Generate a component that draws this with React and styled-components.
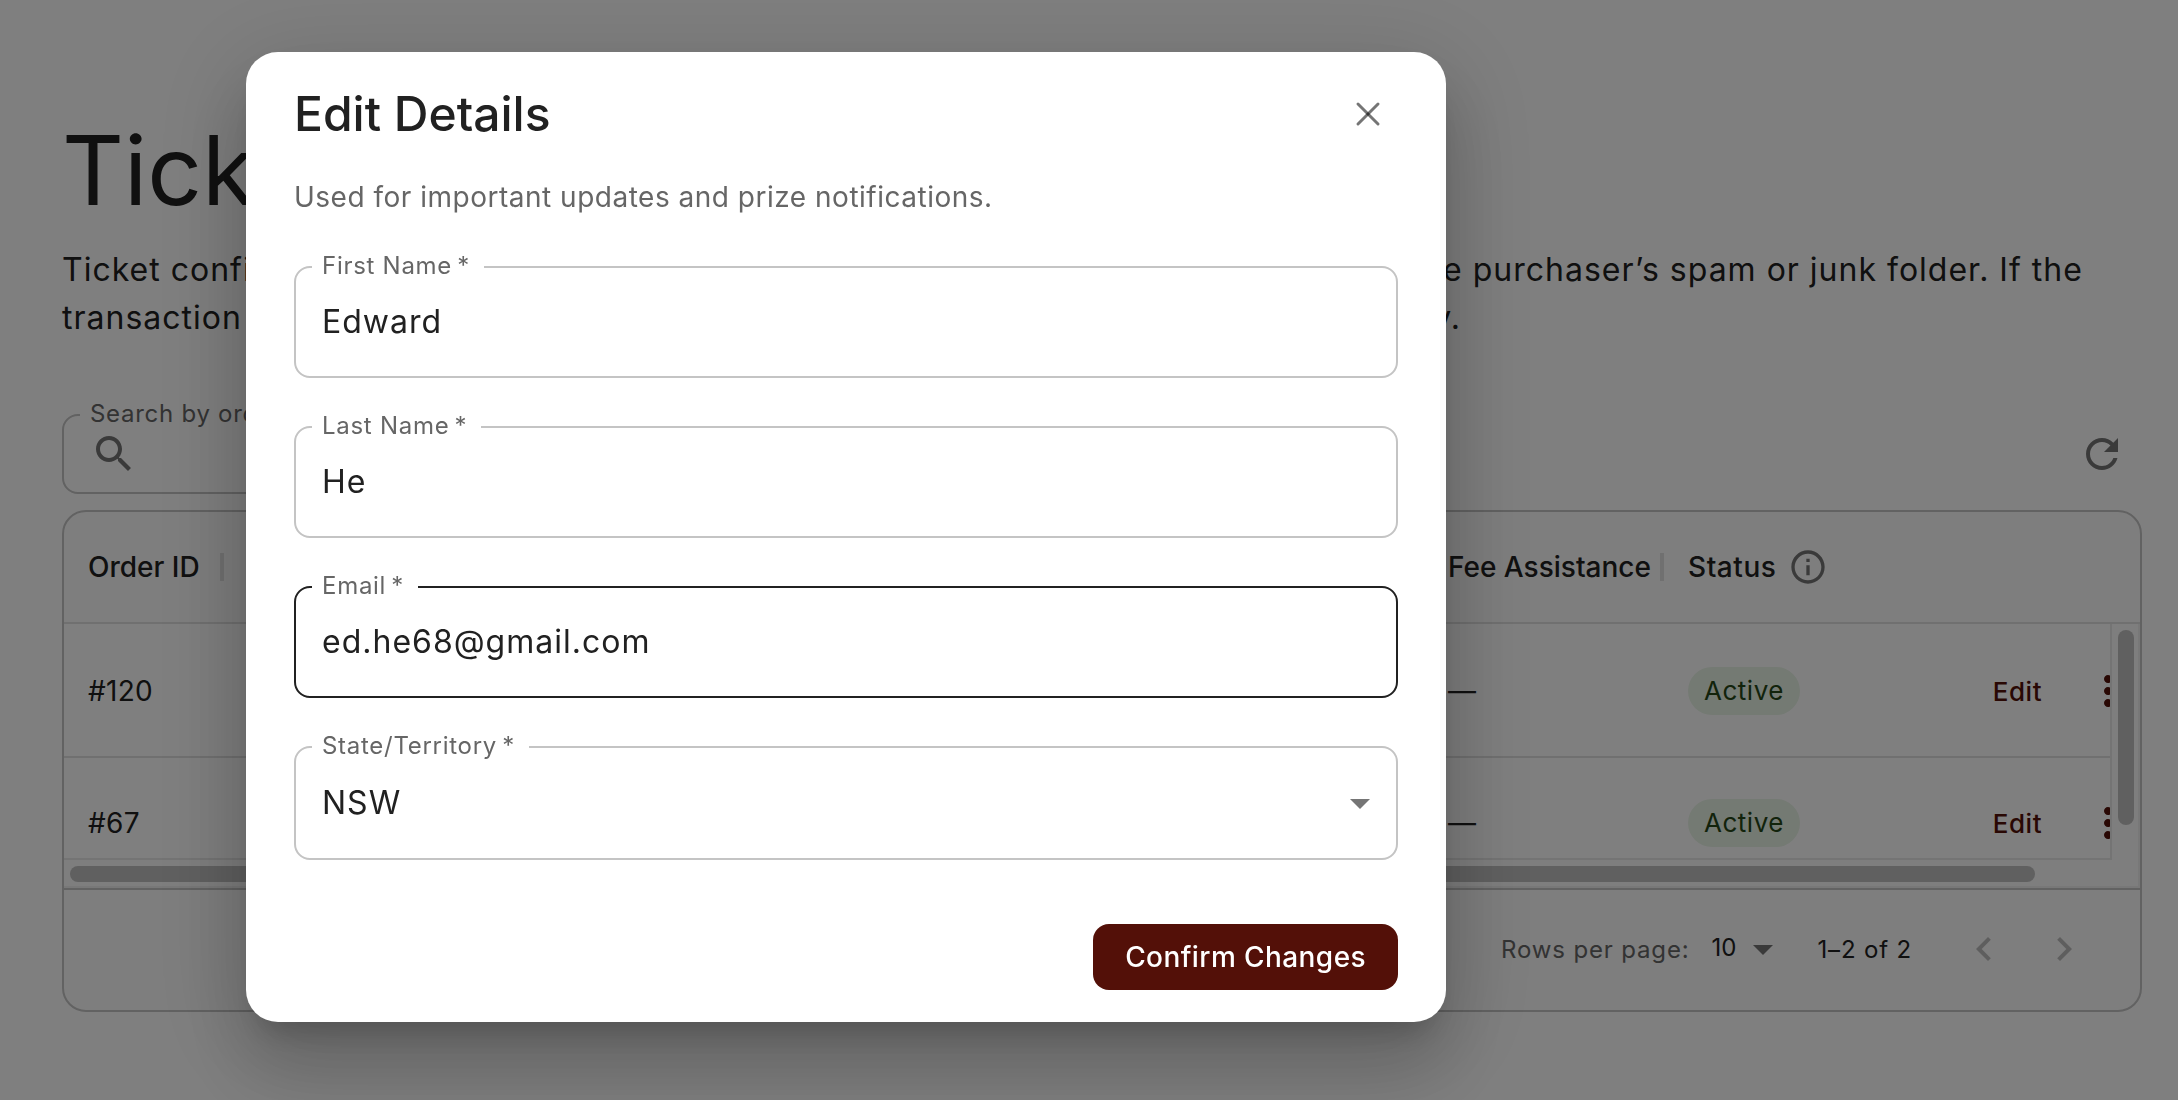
import React from "react";
import styled, { createGlobalStyle } from "styled-components";

const GlobalStyle = createGlobalStyle`
  * { box-sizing: border-box; }
  body {
    margin: 0;
    background: #fff;
    color: #212121;
    font-family: Inter, "Liberation Sans", sans-serif;
    overflow: hidden;
  }
  button, input, select { font: inherit; letter-spacing: inherit; color: inherit; }
`;

const Page = styled.main`
  min-height: 100vh;
  padding: 114px 36px 88px 62px;
`;

const PageTitle = styled.h1`
  margin: 0 0 20px;
  font-size: 96px;
  line-height: 112px;
  font-weight: 400;
`;

const Intro = styled.p`
  margin: 0 0 72px;
  font-size: 32px;
  line-height: 48px;
  letter-spacing: 1px;
`;

const Toolbar = styled.div`
  display: flex;
  align-items: center;
  justify-content: space-between;
  margin-bottom: 16px;
`;

const Outline = styled.div`
  position: relative;
  display: flex;
  align-items: center;
  width: ${(p) => p.$width || "100%"};
  height: ${(p) => p.$height || "112px"};
  padding: 0 ${(p) => p.$endPad || "26px"} 0 26px;
  border: 2px solid ${(p) => (p.$active ? "#212121" : "#c4c4c4")};
  border-radius: 16px;
`;

const FloatingLabel = styled.label`
  position: absolute;
  top: -14px;
  left: 16px;
  padding: 0 14px 0 10px;
  background: #fff;
  color: #666;
  font-size: 24px;
  line-height: 24px;
  letter-spacing: 0.03em;
  white-space: nowrap;
`;

const TextInput = styled.input`
  flex: 1;
  min-width: 0;
  height: 64px;
  padding: 0 0 2px;
  border: 0;
  outline: 0;
  background: transparent;
  font-size: 32px;
  letter-spacing: 1px;
`;

const Dropdown = styled.select`
  flex: 1;
  height: 64px;
  padding: 0 0 2px;
  border: 0;
  outline: 0;
  appearance: none;
  background: transparent;
  font-size: 32px;
  letter-spacing: 1px;
`;

const IconButton = styled.button`
  display: flex;
  align-items: center;
  justify-content: center;
  flex: none;
  width: 80px;
  height: 80px;
  padding: 0;
  border: 0;
  background: none;
  color: ${(p) => p.$color || "#757575"};
`;

const Glyph = styled.svg`
  display: block;
  flex: none;
  width: ${(p) => p.$size || 48}px;
  height: ${(p) => p.$size || 48}px;
  fill: currentColor;
  color: ${(p) => p.$color || "inherit"};
`;

const GridCard = styled.section`
  border: 2px solid #c4c4c4;
  border-radius: 24px;
  background: #fcfcfc;
  overflow: hidden;
`;

const TableArea = styled.div`
  position: relative;
  padding-bottom: 30px;
`;

const Table = styled.table`
  display: block;
  font-size: 28px;
`;

const Head = styled.thead`
  display: block;
  border-bottom: 2px solid #e0e0e0;
`;

const HeadRow = styled.tr`
  display: flex;
  height: 110px;
`;

const Body = styled.tbody`
  display: block;
  height: 234px;
  margin-right: 30px;
  overflow: hidden;
  background: #fff;
`;

const Row = styled.tr`
  display: flex;
  height: 132px;
  margin-right: -30px;
  border-top: 2px solid ${(p) => (p.$ruled ? "#e0e0e0" : "transparent")};
`;

const Cell = styled.td`
  display: flex;
  align-items: center;
  flex: ${(p) => (p.$width ? `0 0 ${p.$width}px` : "1 1 0")};
  min-width: 0;
  padding: 0 0 0 24px;
  letter-spacing: 0.01em;
  white-space: nowrap;
`;

const HeadCell = styled(Cell).attrs({ as: "th", scope: "col" })`
  justify-content: space-between;
  font-weight: 500;
  letter-spacing: 0;
  ${(p) =>
    p.$divided &&
    `&::after { content: ""; width: 4px; height: 28px; background: #e0e0e0; }`}
`;

const HeadGroup = styled.span`
  display: flex;
  align-items: center;
  gap: 12px;
  letter-spacing: 0.02em;
`;

const Chip = styled.span`
  padding: 0 16px;
  border-radius: 24px;
  background: #e9f4e7;
  color: #244617;
  font-size: 26px;
  letter-spacing: 0.02em;
  line-height: 48px;
`;

const EditButton = styled.button`
  padding: 0 34px;
  border: 0;
  background: none;
  && { color: #531008; letter-spacing: 0.02em; }
  font-size: 26px;
  font-weight: 500;
`;

const Actions = styled.div`
  display: flex;
  align-items: center;
  justify-content: flex-end;
  flex: 1;
`;

const MoreButton = styled(IconButton)`
  width: 64px;
`;

const VerticalTrack = styled.div`
  position: absolute;
  top: 112px;
  right: 0;
  bottom: 30px;
  width: 30px;
  padding: 6px 4px 0 6px;
  border-left: 2px solid #e8e8e8;
  border-right: 2px solid #f0f0f0;
`;

const HorizontalTrack = styled.div`
  position: absolute;
  left: 0;
  right: 0;
  bottom: 0;
  height: 30px;
  padding: 6px 0 4px 6px;
  border-bottom: 2px solid #f0f0f0;
  border-right: 2px solid #f0f0f0;

  &::before {
    content: "";
    display: block;
    height: 2px;
    margin: -6px 26px 6px -6px;
    background: #e8e8e8;
  }
`;

const Thumb = styled.div`
  width: ${(p) => p.$width};
  height: ${(p) => p.$height};
  border-radius: 8px;
  background: #c0c0c0;
`;

const GridFooter = styled.footer`
  display: flex;
  align-items: center;
  justify-content: flex-end;
  height: 122px;
  padding: 0 36px 2px 0;
  border-top: 2px solid #c4c4c4;
  font-size: 24px;
  letter-spacing: 0.035em;
`;

const PageSize = styled.div`
  display: flex;
  align-items: center;
  margin: 0 30px 0 22px;
`;

const PageSizeSelect = styled(Dropdown)`
  flex: none;
  width: 28px;
  padding-bottom: 4px;
  font-size: 24px;
  letter-spacing: 0;
`;

const RowsLabel = styled.label`
  color: #666;
`;

const Range = styled.span`
  margin-right: 32px;
`;

const Backdrop = styled.div`
  position: fixed;
  inset: 0;
  padding: 52px 246px;
  background: rgba(0, 0, 0, 0.5);
`;

const Dialog = styled.form`
  max-width: 1200px;
  padding: 0 48px 32px;
  border-radius: 32px;
  background: #fff;
  box-shadow:
    0 22px 30px -14px rgba(0, 0, 0, 0.2),
    0 48px 76px 6px rgba(0, 0, 0, 0.14),
    0 18px 92px 16px rgba(0, 0, 0, 0.12);
`;

const DialogHeader = styled.header`
  display: flex;
  align-items: center;
  justify-content: space-between;
  height: 124px;
`;

const DialogTitle = styled.h2`
  margin: 0;
  font-size: 48px;
  line-height: 64px;
  font-weight: 500;
`;

const CloseButton = styled(IconButton)`
  width: 60px;
`;

const DialogText = styled.p`
  margin: 0 0 48px;
  color: #666;
  font-size: 28px;
  line-height: 42px;
  letter-spacing: 0.018em;
`;

const Fields = styled.div`
  display: flex;
  flex-direction: column;
  gap: 48px;
`;

const DialogActions = styled.div`
  display: flex;
  justify-content: flex-end;
  margin-top: 64px;
`;

const ConfirmButton = styled.button`
  height: 66px;
  padding: 0 32px;
  border: 0;
  border-radius: 16px;
  background: #531008;
  && { color: #fff; letter-spacing: 0.015em; }
  font-size: 28px;
  font-weight: 500;
`;

const paths = {
  search:
    "M15.5 14h-.79l-.28-.27C15.41 12.59 16 11.11 16 9.5 16 5.91 13.09 3 9.5 3S3 5.91 3 9.5 5.91 16 9.5 16c1.61 0 3.09-.59 4.23-1.57l.27.28v.79l5 4.99L20.49 19zm-6 0C7.01 14 5 11.99 5 9.5S7.01 5 9.5 5 14 7.01 14 9.5 11.99 14 9.5 14",
  refresh:
    "M17.65 6.35C16.2 4.9 14.21 4 12 4c-4.42 0-7.99 3.58-7.99 8s3.57 8 7.99 8c3.73 0 6.84-2.55 7.73-6h-2.08c-.82 2.33-3.04 4-5.65 4-3.31 0-6-2.69-6-6s2.69-6 6-6c1.66 0 3.14.69 4.22 1.78L13 11h7V4z",
  info:
    "M11 7h2v2h-2zm0 4h2v6h-2zm1-9C6.48 2 2 6.48 2 12s4.48 10 10 10 10-4.48 10-10S17.52 2 12 2m0 18c-4.41 0-8-3.59-8-8s3.59-8 8-8 8 3.59 8 8-3.59 8-8 8",
  more:
    "M12 8c1.1 0 2-.9 2-2s-.9-2-2-2-2 .9-2 2 .9 2 2 2m0 2c-1.1 0-2 .9-2 2s.9 2 2 2 2-.9 2-2-.9-2-2-2m0 6c-1.1 0-2 .9-2 2s.9 2 2 2 2-.9 2-2-.9-2-2-2",
  left: "M15.41 16.59 10.83 12l4.58-4.59L14 6l-6 6 6 6z",
  right: "M8.59 16.59 13.17 12 8.59 7.41 10 6l6 6-6 6z",
  drop: "m7 10 5 5 5-5z",
};

function Icon({ name, size, color }) {
  return (
    <Glyph viewBox="0 0 24 24" $size={size} $color={color} aria-hidden="true">
      <path d={paths[name]} />
    </Glyph>
  );
}

function Field({ id, label, value, type = "text", active }) {
  return (
    <Outline $active={active}>
      <FloatingLabel htmlFor={id}>{label}{"\u2009*"}</FloatingLabel>
      <TextInput id={id} type={type} defaultValue={value} />
    </Outline>
  );
}

const columns = [
  { title: "Order ID", width: 160 },
  { title: "Name" },
  { title: "Email" },
  { title: "Tickets" },
  { title: "Fee Assistance", width: 240 },
];

const orders = [
  { id: "#120", name: "Edward He", email: "ed.he68@gmail.com", tickets: 1 },
  { id: "#67", name: "Edward He", email: "ed.he68@gmail.com", tickets: 1 },
];

function OrdersGrid() {
  return (
    <GridCard>
      <TableArea>
        <Table>
          <Head>
            <HeadRow>
              {columns.map((c) => (
                <HeadCell key={c.title} $width={c.width} $divided>
                  {c.title}
                </HeadCell>
              ))}
              <HeadCell $width={476}>
                <HeadGroup>
                  Status
                  <Icon name="info" size={40} color="#757575" />
                </HeadGroup>
              </HeadCell>
            </HeadRow>
          </Head>
          <Body>
            {orders.map((o, i) => (
              <Row key={o.id} $ruled={i > 0}>
                <Cell $width={160}>{o.id}</Cell>
                <Cell>{o.name}</Cell>
                <Cell>{o.email}</Cell>
                <Cell>{o.tickets}</Cell>
                <Cell $width={240}>—</Cell>
                <Cell $width={476}>
                  <Chip>Active</Chip>
                  <Actions>
                    <EditButton type="button">Edit</EditButton>
                    <MoreButton type="button" aria-label="More" $color="#531008">
                      <Icon name="more" />
                    </MoreButton>
                  </Actions>
                </Cell>
              </Row>
            ))}
          </Body>
        </Table>
        <VerticalTrack>
          <Thumb $width="16px" $height="195px" />
        </VerticalTrack>
        <HorizontalTrack>
          <Thumb $width="95%" $height="16px" />
        </HorizontalTrack>
      </TableArea>
      <GridFooter>
        <RowsLabel htmlFor="page-size">Rows per page:</RowsLabel>
        <PageSize>
          <PageSizeSelect id="page-size" defaultValue="10">
            <option>10</option>
          </PageSizeSelect>
          <Icon name="drop" color="#757575" />
        </PageSize>
        <Range>1–2 of 2</Range>
        <IconButton type="button" aria-label="Previous page" $color="#bdbdbd">
          <Icon name="left" />
        </IconButton>
        <IconButton type="button" aria-label="Next page" $color="#bdbdbd">
          <Icon name="right" />
        </IconButton>
      </GridFooter>
    </GridCard>
  );
}

function EditDialog() {
  return (
    <Backdrop>
      <Dialog role="dialog" aria-labelledby="dialog-title">
        <DialogHeader>
          <DialogTitle id="dialog-title">Edit Details</DialogTitle>
          <CloseButton type="button" aria-label="Close">
            <Glyph viewBox="0 0 48 48" aria-hidden="true">
              <g stroke="#000" strokeOpacity="0.54" strokeWidth="3" strokeLinecap="round">
                <line x1="14" y1="14" x2="34" y2="34" />
                <line x1="34" y1="14" x2="14" y2="34" />
              </g>
            </Glyph>
          </CloseButton>
        </DialogHeader>
        <DialogText>Used for important updates and prize notifications.</DialogText>
        <Fields>
          <Field id="first-name" label="First Name" value="Edward" />
          <Field id="last-name" label="Last Name" value="He" />
          <Field id="email" label="Email" type="email" value="ed.he68@gmail.com" active />
          <Outline $height="114px" $endPad="12px">
            <FloatingLabel htmlFor="state">State/Territory{"\u2009*"}</FloatingLabel>
            <Dropdown id="state" defaultValue="NSW">
              <option>NSW</option>
            </Dropdown>
            <Icon name="drop" color="#757575" />
          </Outline>
        </Fields>
        <DialogActions>
          <ConfirmButton type="button">Confirm Changes</ConfirmButton>
        </DialogActions>
      </Dialog>
    </Backdrop>
  );
}

export default function App() {
  return (
    <>
      <GlobalStyle />
      <Page>
        <PageTitle>Tickets</PageTitle>
        <Intro>
          Ticket confirmations are sent to the purchaser. If they cannot be traced, also
          check the purchaser’s spam or junk folder. If the transaction was successful, all
          the tickets may be issued to the purchaser immediately.
        </Intro>
        <Toolbar>
          <Outline $width="560px" $height="80px">
            <FloatingLabel htmlFor="search">Search by order ID or name</FloatingLabel>
            <Icon name="search" color="#757575" />
            <TextInput id="search" type="search" />
          </Outline>
          <IconButton type="button" aria-label="Refresh">
            <Icon name="refresh" />
          </IconButton>
        </Toolbar>
        <OrdersGrid />
      </Page>
      <EditDialog />
    </>
  );
}
